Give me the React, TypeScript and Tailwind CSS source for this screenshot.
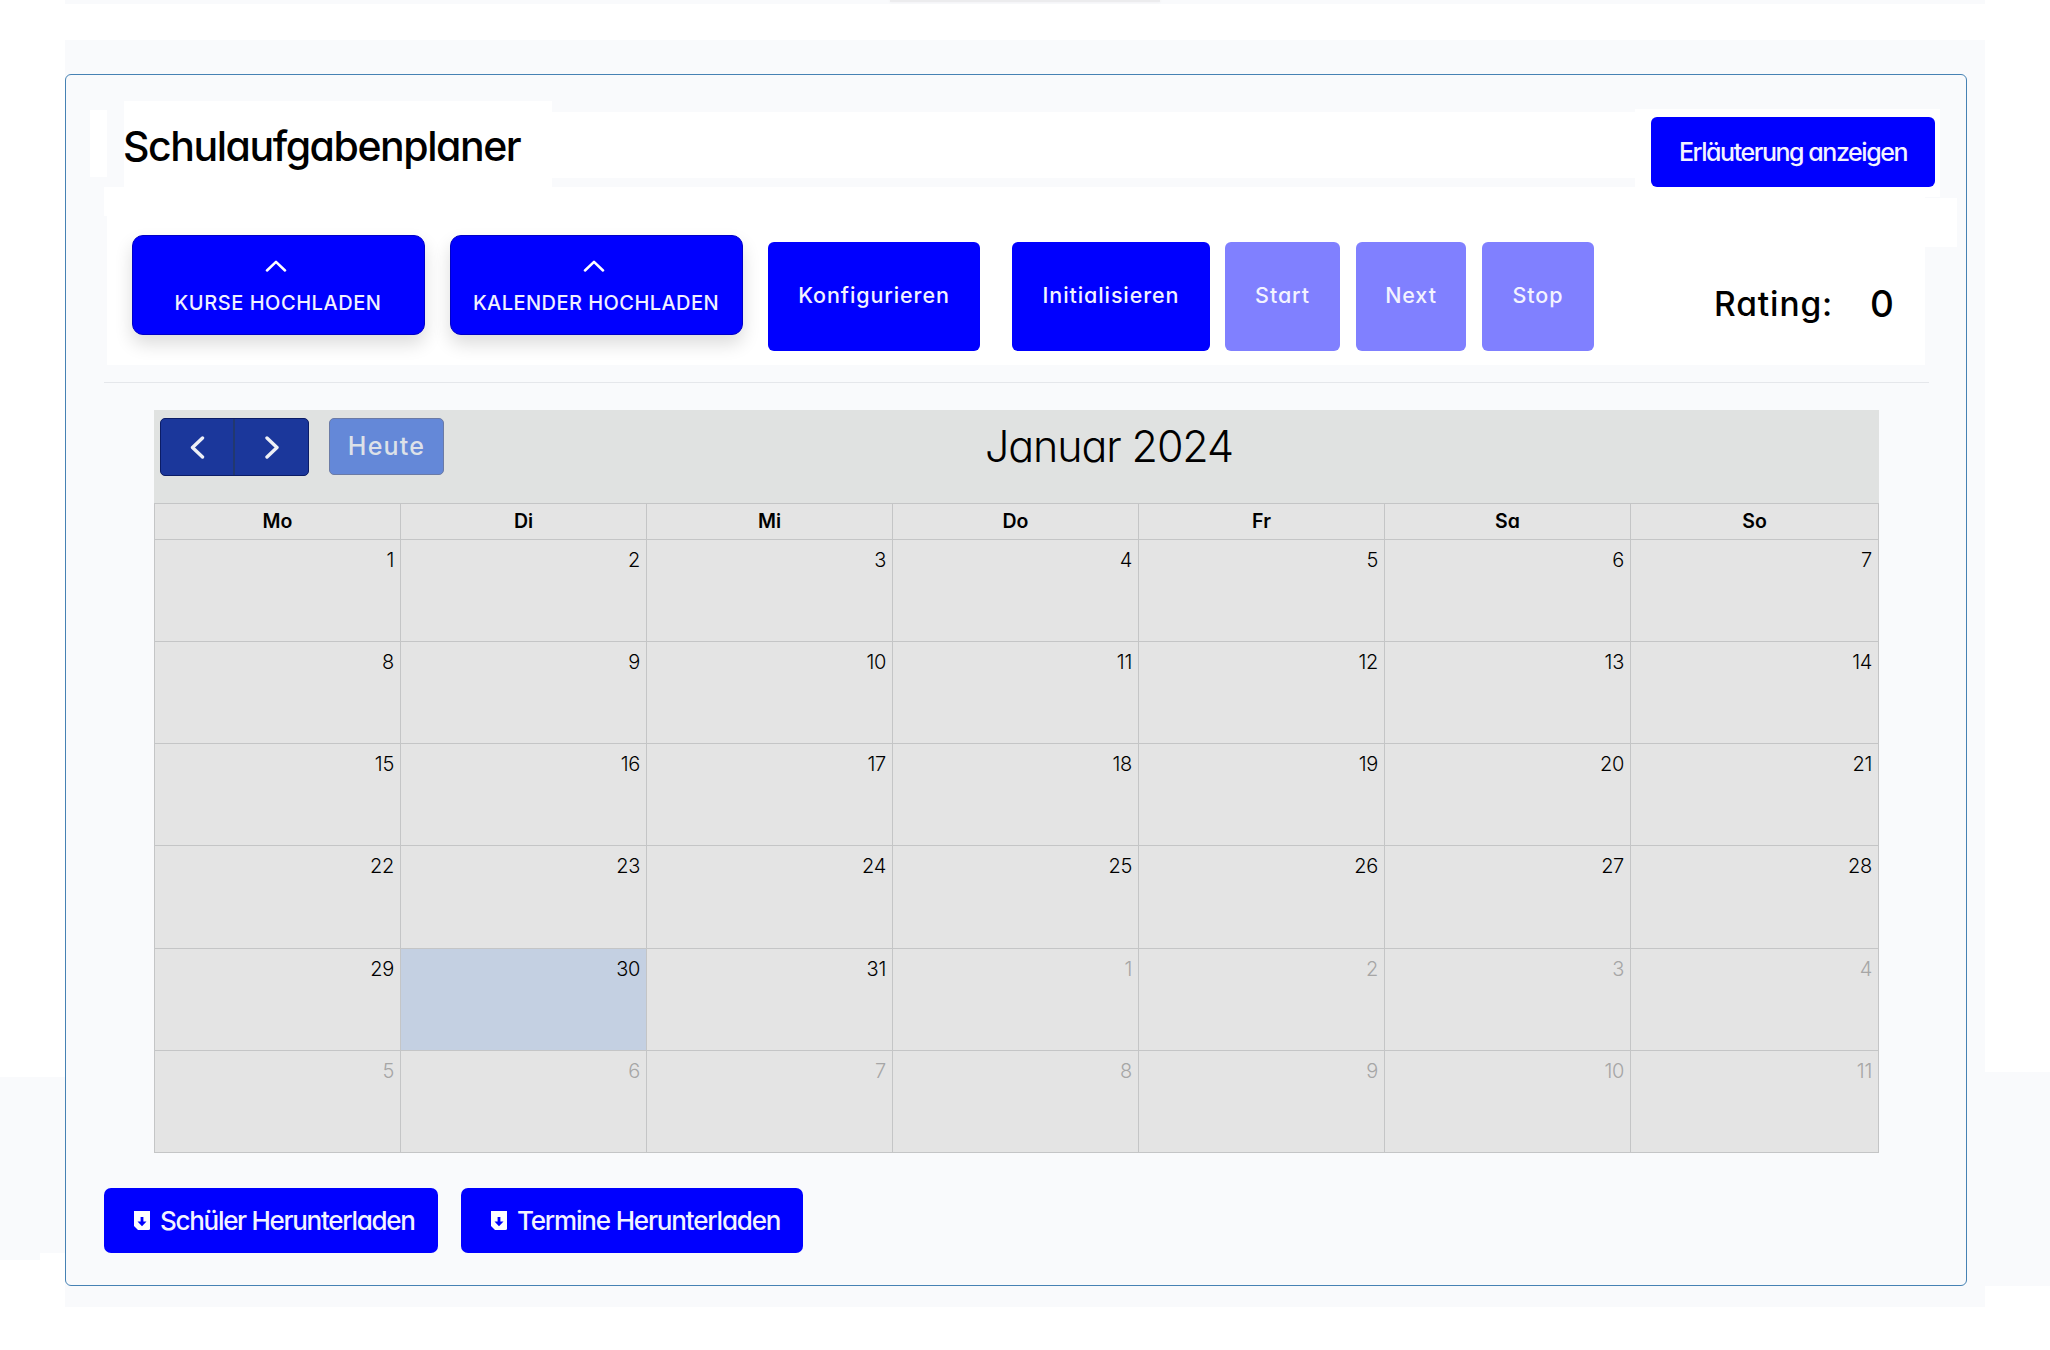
import React from "react";

const WEEKDAYS = ["Mo", "Di", "Mi", "Do", "Fr", "Sa", "So"];
const DAYS = Array.from({ length: 42 }, (_, i) => (i < 31 ? i + 1 : i - 30));
const TODAY_INDEX = 29;

function UploadButton({ label, className }: { label: string; className: string }) {
  return (
    <button
      className={`flex h-[100px] w-[293px] shrink-0 flex-col items-center rounded-[11px] border border-[#0000c8] bg-[#0000ff] pt-[24px] text-[20px] leading-[20px] font-medium text-[#f1f1ff] shadow-[0_9px_18px_rgba(0,0,0,0.14)] ${className}`}
    >
      <svg width="22" height="12" viewBox="0 0 22 12" fill="none" className="mr-[6px] mb-[21px] shrink-0">
        <path d="M2 10.5 11 1.8 20 10.5" stroke="#fff" strokeWidth="2.5" strokeLinecap="round" strokeLinejoin="round" />
      </svg>
      <span className="mr-[1px] whitespace-nowrap">{label}</span>
    </button>
  );
}

function ActionButton({ label, className }: { label: string; className: string }) {
  return (
    <button
      className={`mt-[55px] flex h-[109px] shrink-0 items-center justify-center rounded-[6px] pb-[2px] text-[21.5px] font-medium tracking-[0.9px] whitespace-nowrap text-[#f3f3ff] ${className}`}
    >
      {label}
    </button>
  );
}

function DownloadButton({ label, className, textClass }: { label: string; className: string; textClass: string }) {
  return (
    <button className={`flex h-[65px] shrink-0 items-center rounded-[7px] bg-[#0000ff] pl-[30px] text-[26px] text-[#f3f3ff] ${className}`}>
      <svg width="16" height="19" viewBox="0 0 16 19" className="mr-[10px] shrink-0">
        <path d="M0 0H16V17.5Q16 19 14.500 19H4L0 15Z" fill="#fff" />
        <path d="M6.600 6H9.400V10.500H12.500L8 15.200 3.500 10.500H6.600Z" fill="#0000ff" />
      </svg>
      <span className={`font-[450] whitespace-nowrap ${textClass}`}>{label}</span>
    </button>
  );
}

function Toolbar() {
  return (
    <div className="ml-[38px] flex h-[178px] items-start">
      <div className="h-[29px] w-[3px] bg-white" />
      <div className="flex h-[178px] w-[1818px] items-start bg-white">
        <UploadButton label="KURSE HOCHLADEN" className="mt-[48px] ml-[25px] tracking-[0.55px]" />
        <UploadButton label="KALENDER HOCHLADEN" className="mt-[48px] ml-[25px] tracking-[0.45px]" />
        <ActionButton label="Konfigurieren" className="ml-[25px] w-[212px] bg-[#0000ff]" />
        <ActionButton label="Initialisieren" className="ml-[32px] w-[198px] bg-[#0000ff]" />
        <ActionButton label="Start" className="ml-[15px] w-[115px] bg-[#8080ff]" />
        <ActionButton label="Next" className="ml-[16px] w-[110px] bg-[#8080ff]" />
        <ActionButton label="Stop" className="ml-[16px] w-[112px] bg-[#8080ff]" />
        <div className="ml-[120px] flex whitespace-nowrap text-black">
          <span className="mt-[97px] w-[156px] text-[33.5px] leading-[40px] font-[450] tracking-[0.9px]">Rating:</span>
          <span className="mt-[97px] text-[37px] leading-[40px] font-[450]">0</span>
        </div>
      </div>
      <div className="mt-[11px] h-[49px] w-[32px] bg-white" />
    </div>
  );
}

function Calendar() {
  return (
    <div className="ml-[88px] w-[1725px]">
      <div className="flex h-[93px] items-start bg-[#e0e2e1]">
        <div className="mt-[8px] ml-[6px] flex h-[58px] w-[149px] rounded-[5px] border border-[#0b1c66] bg-[#1b379b]">
          <button className="flex w-[74px] items-center justify-center border-r-2 border-[#22386f]">
            <svg width="18" height="24" viewBox="0 0 18 24" fill="none">
              <path d="M14.500 3 4.500 12.500 14.500 22" stroke="#eef0f6" strokeWidth="3.4" strokeLinecap="round" strokeLinejoin="round" />
            </svg>
          </button>
          <button className="flex flex-1 items-center justify-center">
            <svg width="18" height="24" viewBox="0 0 18 24" fill="none">
              <path d="M4 3 14 12.500 4 22" stroke="#eef0f6" strokeWidth="3.4" strokeLinecap="round" strokeLinejoin="round" />
            </svg>
          </button>
        </div>
        <button className="mt-[8px] ml-[20px] flex h-[57px] w-[115px] items-center justify-center rounded-[5px] border border-[#6b7ba6] bg-[#6488d8] pt-[1px] text-[25px] font-medium tracking-[1.2px] text-[#dde1e8]">
          Heute
        </button>
        <h2 className="ml-[541px] text-[43px] leading-[73px] font-[350] tracking-[-1.1px] whitespace-nowrap text-black">Januar 2024</h2>
      </div>
      <div className="grid grid-cols-[repeat(6,246px)_1fr] grid-rows-[36px_repeat(6,102.17px)] border-r border-b border-[#c4c5c6] bg-[#e4e4e4]">
        {WEEKDAYS.map((d) => (
          <div key={d} className="border-t border-l border-[#c4c5c6] text-center text-[19.500px] leading-[35px] font-semibold text-black">
            {d}
          </div>
        ))}
        {DAYS.map((n, i) => (
          <div
            key={i}
            className={`border-t border-l border-[#c4c5c6] pt-[10px] pr-[6px] text-right text-[20px] leading-[20px] font-light tracking-[-0.3px] ${
              i === TODAY_INDEX ? "bg-[#c4d0e2]" : ""
            } ${i > 30 ? "text-[#a6a6a6]" : "text-black"}`}
          >
            {n}
          </div>
        ))}
      </div>
    </div>
  );
}

export default function App() {
  return (
    <div className="flex h-[1350px] w-[2050px] items-start overflow-hidden bg-white font-['Inter','Liberation_Sans',sans-serif] [font-feature-settings:'cv11'_1]">
      <div className="w-[65px] pt-[1077px]">
        <div className="h-[176px] bg-[#f9fafc]" />
        <div className="h-[7px] w-[40px] bg-[#f9fafc]" />
      </div>
      <div className="w-[1920px]">
        <div className="flex h-[4px] justify-center overflow-hidden bg-[#f9fafc]">
          <div className="h-[2px] w-[270px] bg-[#ececee] shadow-[0_0_3px_#ececee]" />
        </div>
        <main className="mt-[36px] h-[1267px] bg-[#f9fafc] pt-[34px]">
          <section className="h-[1212px] w-[1902px] rounded-[6px] border border-[#4682b4]">
            <header className="flex h-[112px] items-start">
              <div className="mt-[35px] ml-[24px] h-[67px] w-[17px] shrink-0 bg-white" />
              <div className="mt-[26px] ml-[17px] flex h-[86px] w-[428px] shrink-0 items-center bg-white pt-[3px]">
                <h1 className="ml-[-1px] text-[41px] leading-[50px] font-medium tracking-[-1.45px] whitespace-nowrap text-black">Schulaufgabenplaner</h1>
              </div>
              <div className="mt-[37px] h-[66px] w-[1083px] shrink-0 bg-white" />
              <div className="mt-[34px] h-[88px] w-[305px] shrink-0 bg-white pt-[8px] pl-[16px]">
                <button className="relative flex h-[70px] w-[284px] items-center justify-center rounded-[6px] bg-[#0000ff] pt-[1px] text-[25px] font-[450] tracking-[-1.45px] whitespace-nowrap text-[#f3f3ff]">
                  Erläuterung anzeigen
                </button>
              </div>
            </header>
            <Toolbar />
            <hr className="mt-[17px] mb-[27px] ml-[38px] w-[1825px] border-[#e5e7eb]" />
            <Calendar />
            <div className="mt-[35px] ml-[38px] flex gap-[23px]">
              <DownloadButton label="Schüler Herunterladen" className="w-[334px]" textClass="tracking-[-1.3px]" />
              <DownloadButton label="Termine Herunterladen" className="w-[342px]" textClass="tracking-[-1.18px]" />
            </div>
          </section>
        </main>
      </div>
      <div className="w-[65px] pt-[1072px]">
        <div className="h-[214px] bg-[#f9fafc]" />
      </div>
    </div>
  );
}
